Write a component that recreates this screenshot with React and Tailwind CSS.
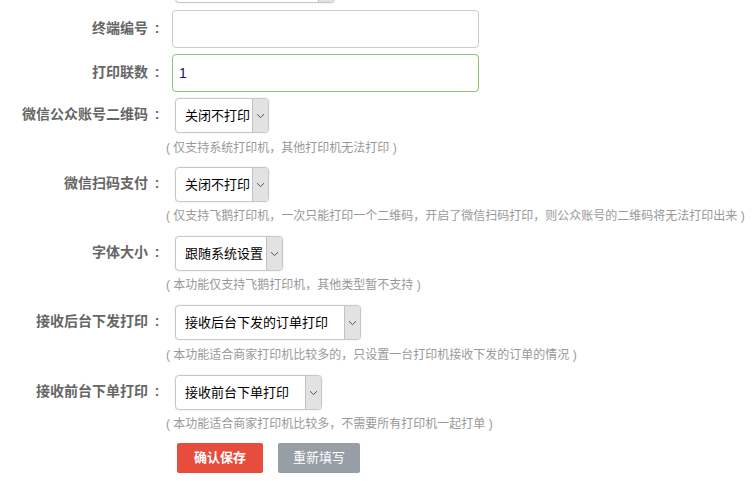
import React from 'react'

const font = { fontFamily: '"Liberation Sans", "Noto Sans CJK SC", sans-serif' }

const Chevron = () => (
  <svg width="9" height="6" viewBox="0 0 9 6" fill="none">
    <path d="M1 1.2 L4.5 4.6 L8 1.2" stroke="#555" strokeWidth="1" />
  </svg>
)

const FakeSelect = ({ text, width, className = '' }) => (
  <div
    className={`flex h-[35px] items-stretch rounded-[4px] border border-[#c8c8c8] bg-white shadow-[0_0_2px_rgba(0,0,0,0.12)] ${className}`}
    style={{ width }}
  >
    <div className="flex flex-1 items-center pl-[9px] text-[13px] text-black whitespace-nowrap">{text}</div>
    <div className="flex w-[16px] items-center justify-center rounded-r-[3px] border-l border-[#c2c2c2] bg-[#e2e2e2]">
      <Chevron />
    </div>
  </div>
)

// label text, colon sits centred in its own full-width box
const Label = ({ children }) => (
  <div className="w-[162px] shrink-0 text-right text-[14px] font-bold text-[#666] -mt-[2px] whitespace-nowrap">
    {children}
    <span className="inline-block w-[14px] pl-[4px] text-center">:</span>
  </div>
)

const Hint = ({ children, className = '' }) => (
  <div className={`h-[16px] pl-[166px] text-[12px] leading-[16px] text-[#999] whitespace-nowrap ${className}`}>
    (&nbsp;{children}&nbsp;)
  </div>
)

const SelectRow = ({ label, text, width, className = '' }) => (
  <div className={`flex items-center ${className}`}>
    <Label>{label}</Label>
    <FakeSelect text={text} width={width} className="ml-[13px]" />
  </div>
)

export default function App() {
  return (
    <div className="h-[481px] w-[752px] overflow-hidden bg-white" style={font}>
      <div className="flex -mt-[32px]">
        <div className="w-[162px] shrink-0" />
        <FakeSelect text="" width={160} className="ml-[13px]" />
      </div>

      <div className="mt-[7px] flex items-center">
        <Label>终端编号</Label>
        <div className="ml-[10px] h-[38px] w-[307px] rounded-[4px] border border-[#ccc] bg-white" />
      </div>

      <div className="mt-[6px] flex items-center">
        <Label>打印联数</Label>
        <div className="ml-[10px] flex h-[38px] w-[307px] items-center rounded-[4px] border border-[#8cc277] bg-white pl-[6px] text-[14px] text-[#2b0a6e]">
          1
        </div>
      </div>

      <SelectRow className="mt-[6px]" label="微信公众账号二维码" text="关闭不打印" width={94} />
      <Hint className="mt-[7px]">仅支持系统打印机，其他打印机无法打印</Hint>

      <SelectRow className="mt-[11px]" label="微信扫码支付" text="关闭不打印" width={94} />
      <Hint className="mt-[6px]">仅支持飞鹅打印机，一次只能打印一个二维码，开启了微信扫码打印，则公众账号的二维码将无法打印出来</Hint>

      <SelectRow className="mt-[12px]" label="字体大小" text="跟随系统设置" width={108} />
      <Hint className="mt-[6px]">本功能仅支持飞鹅打印机，其他类型暂不支持</Hint>

      <SelectRow className="mt-[12px]" label="接收后台下发打印" text="接收后台下发的订单打印" width={186} />
      <Hint className="mt-[7px]">本功能适合商家打印机比较多的，只设置一台打印机接收下发的订单的情况</Hint>

      <SelectRow className="mt-[12px]" label="接收前台下单打印" text="接收前台下单打印" width={147} />
      <Hint className="mt-[6px]">本功能适合商家打印机比较多，不需要所有打印机一起打单</Hint>

      <div className="mt-[11px] flex gap-[15px] pl-[177px]">
        <button className="h-[30px] w-[86px] rounded-[2px] bg-[#e74c3c] text-[13px] font-bold text-white">确认保存</button>
        <button className="h-[30px] w-[82px] rounded-[2px] bg-[#989ea5] text-[13px] text-white">重新填写</button>
      </div>
    </div>
  )
}
